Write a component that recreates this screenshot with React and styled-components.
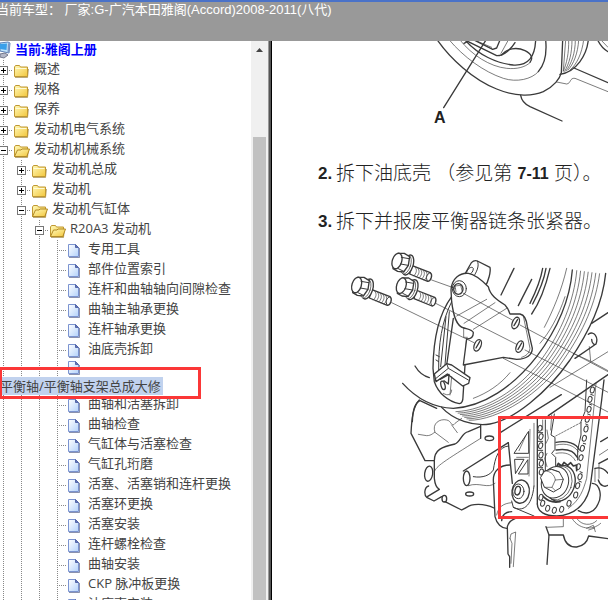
import { useState } from 'react';
import styled, { createGlobalStyle, css } from 'styled-components';

const GlobalStyle = createGlobalStyle`
    * {
        box-sizing: border-box;
    }

    body {
        margin: 0;
        overflow: hidden;
        background-color: #fff;
        font-family: 'Open Sans', 'Noto Sans CJK SC', sans-serif;
        font-size: 13px;
        color: #444;
    }
`;

const Page = styled.div`
    height: 100vh;
    display: flex;
    flex-direction: column;
`;

const Header = styled.header`
    height: 41px;
    flex-shrink: 0;
    border-top: 2px solid #4a72c8;
    background-color: #999;
    color: #fff;
`;

const CarName = styled.p`
    margin: 0 0 0 -4px;
    font-family: 'Liberation Sans', 'Noto Sans CJK SC', sans-serif;
    font-size: 13px;
    line-height: 16px;
    white-space: nowrap;
`;

const Main = styled.div`
    flex: 1;
    min-height: 0;
    display: flex;
`;

const Sidebar = styled.nav`
    width: 272px;
    flex-shrink: 0;
    display: flex;
    border-right: 1px solid #000;
`;

const Tree = styled.div`
    flex: 1;
    min-width: 0;
    overflow: hidden;
`;

const Root = styled.div`
    height: 19px;
    display: flex;
    align-items: flex-start;
    gap: 4px;
`;

const RootLink = styled.a`
    color: #00f;
    font-weight: 700;
    line-height: 16px;
    text-decoration: none;
    white-space: nowrap;
`;

const List = styled.ul`
    margin: 0 0 0 -6px;
    padding: 0;
    list-style: none;
`;

const Item = styled.li`
    position: relative;
`;

const Row = styled.div`
    height: ${({$short}) => $short ? '17px' : '20px'};
    display: flex;
    align-items: ${({$short}) => $short ? 'flex-end' : 'flex-start'};
    overflow: ${({$short}) => $short ? 'hidden' : 'visible'};
`;

const vertical = css`
    background-image: repeating-linear-gradient(to bottom, #888 0 1px, transparent 1px 2px);
    background-size: 1px 100%;
    background-position: 9px 0;
    background-repeat: no-repeat;
`;

const Guide = styled.span`
    position: relative;
    width: 18px;
    height: 20px;
    flex-shrink: 0;
    ${vertical}

    &::after {
        content: '';
        display: ${({$branch}) => $branch ? 'block' : 'none'};
        position: absolute;
        left: 9px;
        top: 10px;
        width: 10px;
        height: 1px;
        background-image: repeating-linear-gradient(to right, #888 0 1px, transparent 1px 2px);
    }
`;

const Toggle = styled.button`
    position: absolute;
    left: 5px;
    top: 6px;
    z-index: 1;
    width: 9px;
    height: 9px;
    padding: 0;
    border: none;
    background: none;
    cursor: pointer;

    svg {
        display: block;
    }
`;

const Icon = styled.svg`
    width: 18px;
    height: 20px;
    flex-shrink: 0;
`;

const Label = styled.a`
    margin-left: 4px;
    color: inherit;
    line-height: 16px;
    text-decoration: none;
    white-space: nowrap;
`;

const Selected = styled.a`
    display: block;
    width: fit-content;
    height: 18px;
    margin-left: 6px;
    padding-right: 2px;
    background-color: #c1d2ee;
    color: inherit;
    line-height: 18px;
    text-decoration: none;
    white-space: nowrap;
`;

const Mark = styled.div`
    position: absolute;
    left: 5px;
    top: 7px;
    z-index: 2;
    width: 202px;
    height: 32px;
    border: 3px solid #fb3737;
    pointer-events: none;
`;

const Scrollbar = styled.div`
    width: 17px;
    flex-shrink: 0;
    display: flex;
    flex-direction: column;
    align-items: center;
    background-color: #f0f0f0;
`;

const ScrollUp = styled.button`
    width: 17px;
    height: 17px;
    padding: 0;
    border: none;
    background: none;

    svg {
        display: block;
    }
`;

const Thumb = styled.div`
    flex: 1;
    width: 13px;
    margin-top: 79px;
    background-color: #c1c1c1;
`;

const Divider = styled.div`
    width: 3px;
    flex-shrink: 0;
    border-left: 1px solid #999;
    background-color: #555;
`;

const Manual = styled.main`
    flex: 1;
    min-width: 0;
    overflow: hidden;
    background-color: #fff;
    color: #222;
`;

const Figure = styled.svg`
    display: block;
    width: 336px;
    height: ${({$height}) => $height}px;
    fill: none;
    stroke: #3a3a3a;
    stroke-width: 4;
    stroke-linecap: round;
    stroke-linejoin: round;
`;

const Steps = styled.div`
    display: flex;
    flex-direction: column;
    gap: 24px;
    padding: 22px 0 6px 46px;
`;

const Step = styled.p`
    display: flex;
    margin: 0;
    font-family: 'Liberation Sans', 'Noto Sans CJK SC', sans-serif;
    font-size: 19px;
    font-weight: 300;
    line-height: 24px;
    white-space: nowrap;
`;

const Num = styled.b`
    width: 18px;
    font-size: 17px;
    font-weight: 700;
`;

const PageRef = styled.b`
    font-size: 16px;
    font-weight: 700;
`;

const folders = [
    {text: '概述', level: 0},
    {text: '规格', level: 0},
    {text: '保养', level: 0},
    {text: '发动机电气系统', level: 0},
    {text: '发动机机械系统', level: 0, open: true},
    {text: '发动机总成', level: 1},
    {text: '发动机', level: 1},
    {text: '发动机气缸体', level: 1, open: true},
    {text: 'R20A3 发动机', level: 2, open: true},
];

const pages = [
    '专用工具',
    '部件位置索引',
    '连杆和曲轴轴向间隙检查',
    '曲轴主轴承更换',
    '连杆轴承更换',
    '油底壳拆卸',
    '平衡轴/平衡轴支架总成大修',
    '曲轴和活塞拆卸',
    '曲轴检查',
    '气缸体与活塞检查',
    '气缸孔珩磨',
    '活塞、活塞销和连杆更换',
    '活塞环更换',
    '活塞安装',
    '连杆螺栓检查',
    '曲轴安装',
    'CKP 脉冲板更换',
    '油底壳安装',
];

const ComputerIcon = () => (
    <svg width="11" height="18" viewBox="0 0 11 18">
        <path d="M0 2 L8 1 L10 2 L9 12 L0 10Z" fill="#bfe4fb" stroke="#5b7fb5" />
        <path d="M0 3 L7 2.5 L6.5 9 L0 8Z" fill="#3aa0ea" />
        <path d="M8 2 L10 3 L9 12 L7.5 11Z" fill="#7f98c4" />
        <path d="M0 13 L5 12 L8 14 L4 17 L0 16Z" fill="#b4b8c8" stroke="#74788c" />
    </svg>
);

const FolderIcon = ({open}) => (
    <Icon viewBox="0 0 18 20">
        <defs>
            <linearGradient id="folder" x1="0" y1="0" x2="1" y2="1">
                <stop offset="0" stopColor="#fff9b8" />
                <stop offset="1" stopColor="#f2c63c" />
            </linearGradient>
        </defs>
        <path d="M3 17.5H15.5L16.5 9" fill="none" stroke="#8d6f22" strokeOpacity=".6" />
        <path d="M2.5 7 L3.5 5.5H7.5L8.5 7H15.5V16.5H2.5Z" fill="url(#folder)" stroke="#c09832" />
        {
            open
            ? <path d="M2.5 16.5 L5.5 10H9L10 9H17.5L14.8 16.5Z" fill="url(#folder)" stroke="#b28a27" />
            : <path d="M3.5 8.5H14.5" stroke="#fffbd6" />
        }
    </Icon>
);

const PageIcon = () => (
    <Icon viewBox="0 0 18 20">
        <defs>
            <linearGradient id="sheet" x1="0" y1="0" x2="1" y2="1">
                <stop offset="0" stopColor="#fff" />
                <stop offset="1" stopColor="#b4d2fa" />
            </linearGradient>
        </defs>
        <path d="M3 17.5H13.5V8" fill="none" stroke="#3e4a78" strokeOpacity=".6" />
        <path d="M2.5 4.5H9.5L12.5 7.5V16.5H2.5Z" fill="url(#sheet)" stroke="#7b93d0" />
        <path d="M9.5 4.5V7.5H12.5Z" fill="#6478b8" stroke="#5567a8" />
    </Icon>
);

const Folder = ({folder}) => {

    const [open, setOpen] = useState(!!folder.open);

    return (
        <Item>
            <Row>
                {[...Array(folder.level)].map((_, i) => <Guide key={i} />)}
                <Guide $branch>
                    <Toggle onClick={() => setOpen(!open)} aria-label={folder.text}>
                        <svg width="9" height="9" viewBox="0 0 9 9" shapeRendering="crispEdges">
                            <rect x=".5" y=".5" width="8" height="8" fill="#fff" stroke="#777" />
                            <path d={open ? 'M2 4.5H7' : 'M2 4.5H7M4.5 2V7'} stroke="#000" />
                        </svg>
                    </Toggle>
                </Guide>
                <FolderIcon open={open} />
                <Label href="#">{folder.text}</Label>
            </Row>
        </Item>
    )
}

const LeafGuides = () => (
    <>
        <Guide />
        <Guide />
        <Guide />
        <Guide $branch />
        <PageIcon />
    </>
);

const Leaf = ({text, selected}) => (
    <Item>
        <Row $short={selected}>
            <LeafGuides />
            {!selected && <Label href="#">{text}</Label>}
        </Row>
        {selected && <Selected href="#">{text}</Selected>}
        {selected && <Mark />}
    </Item>
);

const Bolt = ({x, y}) => (
    <g transform={`translate(${x} ${y})`}>
        <path d="M28 6 L84 28 C92 34 86 54 76 54 L22 32Z" fill="#fff" />
        <path d="M38 11 C46 19 42 31 34 38 M46 14 C54 22 50 34 42 41 M54 17 C62 25 58 37 50 44 M62 20 C70 28 66 40 58 47 M70 23 C78 31 74 43 66 50" strokeWidth="2" />
        <path d="M84 28 C72 32 69 44 76 54" strokeWidth="3" />
        <ellipse cx="17" cy="5" rx="15" ry="31" transform="rotate(18 17 5)" fill="#fff" />
        <ellipse cx="11" cy="4" rx="14" ry="29" transform="rotate(18 11 4)" fill="#fff" strokeWidth="2" />
        <path d="M-14 -30 L6 -30 L22 -20 L18 6 L4 26 L-14 24 L-28 16Z" fill="#fff" />
        <ellipse cx="-16" cy="-7" rx="14" ry="24" transform="rotate(18 -16 -7)" fill="#fff" />
        <path d="M-3 -18 L20 -14 M-5 2 L17 6 M-12 16 L4 24" strokeWidth="3" />
    </g>
);

// grooves of the pulley, blended from the inner rim to the outer one
const inner = [340, 510, 430, 505, 520, 450, 590, 360, 650, 280, 690, 180, 697, 90];
const outer = [395, 546, 480, 548, 620, 460, 682, 362, 745, 270, 780, 190, 792, 103];
const groove = t => {
    const p = inner.map((v, i) => v + (outer[i] - v) * t);
    return `M${p[0]} ${p[1]} C${p.slice(2, 8).join(' ')} C${p.slice(8).join(' ')}`;
};

const links = [
    [577, -30], [570, -2], [567, 28], [562, 58], [558, 87], [553, 115], [547, 145], [543, 173],
    [535, 200], [540, 230], [533, 257], [527, 285], [507, 310], [485, 328], [463, 331], [443, 325],
    [428, 310], [423, 292], [420, 85], [423, 110], [422, 137], [423, 165], [424, 190], [424, 216],
];

const FrontPulley = () => (
    <Figure $height={99} viewBox="272 41 336 99" aria-label="A">
        <g transform="translate(400 40) scale(.33333)">
            <path d="M112 0 C150 55 220 120 290 147 C350 172 400 168 430 155 C462 140 480 115 484 98 L488 0" />
            <path d="M148 0 C190 50 250 95 310 115 C350 128 395 118 415 95" strokeWidth="2" />
            <path d="M415 95 C437 70 440 30 437 0" />
            <path d="M180 0 C215 45 270 80 320 85 C350 88 375 82 390 68" strokeWidth="2" />
            <path d="M195 0 C235 45 290 70 340 75 C385 78 405 50 407 0" />
            <path d="M305 45 C320 25 350 20 375 32 C395 42 400 55 390 67" />
            <path d="M192 10 L203 4 L290 47 C312 48 335 25 345 8 M222 0 L278 28 L290 24 L300 0" />
            <path d="M325 0 L303 40 M235 5 L275 22" strokeWidth="2" />
            <path d="M258 0 L131 203" />
            <path d="M565 0 C560 45 530 95 480 103" />
            <path d="M497 0 L490 92 M506 0 C507 40 500 70 490 94 M516 0 C516 40 508 70 494 94 M526 0 C526 40 514 72 498 93 M536 0 C534 40 520 74 504 90 M551 0 C546 40 530 74 510 90" strokeWidth="2" />
            <path d="M522 84 L624 128 M593 0 C600 15 612 28 624 35" />
            <path d="M603 0 L624 22 M470 126 L500 132 C514 130 508 113 525 115 L624 155" strokeWidth="2" />
            <path d="M362 166 C365 185 380 195 390 200 L486 243" />
        </g>
        <text x="434" y="123" fill="#222" stroke="none" fontFamily="Liberation Sans, sans-serif" fontSize="16" fontWeight="700">A</text>
    </Figure>
);

const Balancer = () => (
    <Figure $height={360} viewBox="272 240 336 360">
        <g transform="translate(400 400) scale(.33333)">
            <path d="M58 0 C38 20 35 60 33 100 L75 182 H103" />
            <path d="M55 103 L80 107 C95 107 100 98 105 97 C95 70 120 55 140 60 C155 62 155 85 165 70 L185 55 M105 97 L145 127 M155 75 L172 98" strokeWidth="2" />
            <path d="M103 182 C103 150 125 140 165 132 C182 125 185 98 205 95 L240 80 M242 75 V115" />
            <path d="M103 215 C110 198 125 188 242 115" strokeWidth="2" />
            <path d="M103 182 V235 C105 255 112 265 118 268 L82 290" />
            <ellipse cx="86" cy="221" rx="12" ry="23" transform="rotate(8 86 221)" />
            <path d="M86 258 C72 262 72 285 80 292 L102 303 L125 290 M135 305 L185 330 C208 318 212 313 235 313 C258 313 270 318 282 324" />
            <ellipse cx="133" cy="296" rx="7" ry="10" />
            <ellipse cx="268" cy="115" rx="13" ry="7" />
            <ellipse cx="209" cy="282" rx="12" ry="6" />
            <path d="M190 213 L325 128 M302 97 L484 -16" />
            <ellipse cx="200" cy="235" rx="10" ry="22" />
            <path d="M205 257 C240 245 262 268 285 250" strokeWidth="2" />
            <path d="M220 230 C250 235 270 225 280 210 C285 175 295 140 325 138" strokeWidth="3" />
            <path d="M330 195 C300 195 280 212 280 240 L285 350 C290 372 305 385 320 385" />
            <path d="M325 128 L337 250 M412 58 V312" />
            <path d="M402 70 V258 M390 88 L387 228" strokeWidth="2" />
            <path d="M385 95 L342 160 H385Z M345 178 H372 L347 220Z M383 180 L355 222 H383Z" strokeWidth="3" />
            <path d="M377 108 L357 152 M350 172 H385" strokeWidth="2" />
            <ellipse cx="362" cy="275" rx="26" ry="35" transform="rotate(8 362 275)" fill="#fff" />
            <ellipse cx="355" cy="274" rx="17" ry="22" strokeWidth="3" />
            <ellipse cx="353" cy="272" rx="8" ry="13" transform="rotate(12 353 272)" />
            <path d="M335 303 L340 322 C365 335 395 325 402 258 M340 322 L402 348" strokeWidth="3" />
            <path d="M290 345 C295 320 310 310 335 308" strokeWidth="2" />
            <path d="M436 60 V225 M463 42 L453 105 L465 112 V148 L455 160 L467 172 V205" strokeWidth="3" />
            <path d="M428 60 V90 M455 45 L452 90 M441 90 L445 115 L438 130 M441 160 L434 175 L441 200" strokeWidth="2" />
            <path d="M467 108 L546 66" strokeWidth="2" strokeDasharray="6 4" />
            <path d="M468 127 C500 120 530 130 538 150 M468 150 C500 145 522 152 532 172" />
            <path d="M468 135 C500 128 522 136 536 156 M468 160 C496 155 515 162 526 182" strokeWidth="2" />
            <path d="M560 -60 L555 35 L543 65 V105 L533 150 V180" strokeWidth="3" />
            <path d="M612 -60 L605 0 L572 250 C565 300 535 345 470 348 C435 348 412 335 412 312" />
            <path d="M588 -50 L583 10 L560 235 C550 270 540 300 505 325" strokeWidth="2" />
            {links.map(([x, y]) => (
                <ellipse key={`${x}-${y}`} cx={x} cy={y} rx="6" ry="9" transform={`rotate(15 ${x} ${y})`} fill="#fff" strokeWidth="3" />
            ))}
            <path d="M572 -17 L580 -14 M568 12 L575 15 M563 42 L571 45 M557 72 L564 75 M550 130 L557 132 M540 215 L547 218 M537 243 L544 246 M415 98 L428 98 M415 124 L428 124 M415 151 L428 151 M415 178 L428 178 M415 203 L428 203" strokeWidth="3" />
            <path d="M470 200 L475 190 L485 198 L492 187 L503 196 L512 188 L520 198 L530 195 L530 212" strokeWidth="5" />
            <ellipse cx="482" cy="250" rx="42" ry="55" transform="rotate(20 482 250)" fill="#fff" />
            <ellipse cx="474" cy="249" rx="41" ry="52" transform="rotate(20 474 249)" strokeWidth="2" />
            <ellipse cx="465" cy="247" rx="40" ry="48" transform="rotate(20 465 247)" fill="#fff" strokeWidth="3" />
            <path d="M422 232 L434 213 L455 208 L478 216 L490 238 L481 264 L460 276 L434 262Z" fill="#fff" strokeWidth="3" />
            <path d="M434 213 C450 212 464 224 466 240 L456 262 L434 262 M466 240 L490 238 M455 208 L478 216 M456 262 L466 272" strokeWidth="2" />
            <path d="M430 290 C445 305 465 308 480 305" strokeWidth="5" />
            <path d="M585 205 C605 200 618 212 624 220 M577 250 C602 252 606 290 594 312 C582 340 558 345 535 332 M597 190 L624 176 M602 125 L624 112 M595 240 C600 258 615 262 624 256" />
            <path d="M598 165 L624 148 M597 190 V235 M585 205 V245" strokeWidth="2" />
            <path d="M322 380 L324 462 L329 470 V502 M322 380 C325 365 340 355 362 352 M438 380 L447 405 L441 493" />
            <path d="M305 362 C305 345 318 335 335 335 M447 405 H490 C495 430 510 442 530 441 C550 438 562 425 566 408 L624 416" />
            <path d="M330 415 L333 402 L347 396 L340 500 M330 415 L336 430 L333 490 M440 382 L490 380 V355 M518 358 C535 385 575 395 602 370 M530 355 C545 378 575 378 590 362 M560 385 L580 376 L586 395 M566 390 L584 384" strokeWidth="2" />
        </g>
        <g transform="translate(340 240) scale(.33333)">
            <path d="M188 430 C235 482 285 503 340 505 C430 500 520 440 590 350 C650 270 690 180 697 90" />
            {[0.14, 0.26, 0.38, 0.5, 0.62, 0.74, 0.86].map(t => (
                <path key={t} d={groove(t)} strokeWidth="2" />
            ))}
            <path d="M305 502 C340 540 400 560 450 552 C520 540 620 460 690 360 C750 270 788 190 797 100" />
            <path d="M225 378 C235 395 250 408 268 413 M240 482 C225 488 218 510 217 545 M240 482 L290 505" />
            <path d="M522 85 L483 165 M575 118 L535 197 M608 85 C602 120 585 160 570 190 M618 85 C612 120 595 160 578 192 M630 85 C617 140 597 190 575 222" />
            <path d="M680 85 C665 150 640 210 613 262 M510 398 C480 435 440 460 400 475 M675 170 C655 230 630 275 600 310" strokeWidth="2" />
            <path d="M755 250 L804 218 M745 283 C762 270 776 292 768 312 C764 317 755 310 755 298 M768 312 L705 355 M625 527 L804 404" />
            <path d="M748 320 L752 364 L804 392 M630 442 L804 335 M752 364 L700 340" strokeWidth="2" strokeDasharray="10 2" />
            <path d="M374 104 L390 75 C395 63 405 60 412 63 L450 82 C453 95 445 125 435 140Z" fill="#fff" />
            <path d="M412 63 C420 78 408 98 402 108 M380 96 C385 82 398 78 400 86 C400 96 392 102 388 102" strokeWidth="3" />
            <path d="M335 170 C298 220 280 300 279 385 L283 425 C295 460 325 485 358 491 C366 490 369 485 369 470 L380 297" />
            <path d="M335 185 C305 245 295 310 296 395 M288 345 L298 350 M318 230 L302 380 M328 215 L315 375 M288 360 L296 365" strokeWidth="3" />
            <path d="M340 235 L320 375" />
            <path d="M333 150 C335 115 360 98 385 100 C400 102 425 120 445 140 C450 165 470 180 495 195 C505 205 507 215 510 222 H540 C555 225 560 240 562 260 L577 325 C577 345 560 358 530 358 L490 352 L370 375 L380 297 C392 297 400 290 400 278 C398 270 385 268 372 264 C348 260 340 225 335 185Z" fill="#fff" />
            <path d="M371 264 V292 H382 M550 228 L570 325 C568 340 558 348 545 352" strokeWidth="2" />
            <ellipse cx="358" cy="146" rx="21" ry="24" strokeWidth="3" />
            <ellipse cx="355" cy="147" rx="14" ry="16" fill="#fff" />
            <path d="M345 138 L362 136 L366 152 M345 138 L348 155" strokeWidth="2" />
            <ellipse cx="527" cy="249" rx="10" ry="18" transform="rotate(22 527 249)" />
            <ellipse cx="413" cy="316" rx="10" ry="18" transform="rotate(22 413 316)" />
            <ellipse cx="539" cy="320" rx="10" ry="18" transform="rotate(22 539 320)" />
            <path d="M522 257 L533 238 M408 324 L419 305 M534 328 L545 309" />
            <path d="M283 402 L320 371 L335 375 L390 413 L386 430 L368 438 L322 402 L288 425Z" fill="#fff" />
            <path d="M320 371 L325 385 L385 420 M325 385 L288 415" strokeWidth="3" />
            <path d="M300 418 L327 403 L325 432 L312 422" />
            <ellipse cx="309" cy="436" rx="6" ry="13" transform="rotate(-15 309 436)" />
            <path d="M335 410 L330 465 M310 460 C325 470 335 462 335 450" strokeWidth="2" />
            <path d="M275 120 L345 145 M370 160 L517 240 M540 255 L804 395 M287 190 L530 313 M555 330 L804 457 M155 188 L402 308 M490 355 L804 516 M350 228 L440 178 M372 250 L465 188 M400 268 L500 205" strokeWidth="2" />
            <Bolt x={187} y={70} />
            <Bolt x={200} y={144} />
            <Bolt x={66} y={142} />
        </g>
        <rect x="499.5" y="417.5" width="110" height="100" stroke="#fb3737" strokeWidth="3" strokeLinejoin="miter" />
    </Figure>
);

const App = () => {
    return (
        <>
            <GlobalStyle />
            <Page>
                <Header>
                    <CarName>当前车型： 厂家:G-广汽本田雅阁(Accord)2008-2011(八代)</CarName>
                </Header>
                <Main>
                    <Sidebar>
                        <Tree>
                            <Root>
                                <ComputerIcon />
                                <RootLink href="#">当前:雅阁上册</RootLink>
                            </Root>
                            <List>
                                {folders.map(folder => <Folder key={folder.text} folder={folder} />)}
                                {pages.map((text, i) => <Leaf key={text} text={text} selected={i === 6} />)}
                            </List>
                        </Tree>
                        <Scrollbar>
                            <ScrollUp aria-label="Scroll up">
                                <svg width="17" height="17" viewBox="0 0 17 17">
                                    <path d="M5 11 L8.5 7 L12 11Z" fill="#444" />
                                </svg>
                            </ScrollUp>
                            <Thumb />
                        </Scrollbar>
                        <Divider />
                    </Sidebar>
                    <Manual>
                        <FrontPulley />
                        <Steps>
                            <Step><Num>2.</Num>拆下油底壳 （参见第&nbsp;<PageRef>7-11</PageRef>&nbsp;页）。</Step>
                            <Step><Num>3.</Num>拆下并报废平衡器链条张紧器。</Step>
                        </Steps>
                        <Balancer />
                    </Manual>
                </Main>
            </Page>
        </>
    )
}

export default App
